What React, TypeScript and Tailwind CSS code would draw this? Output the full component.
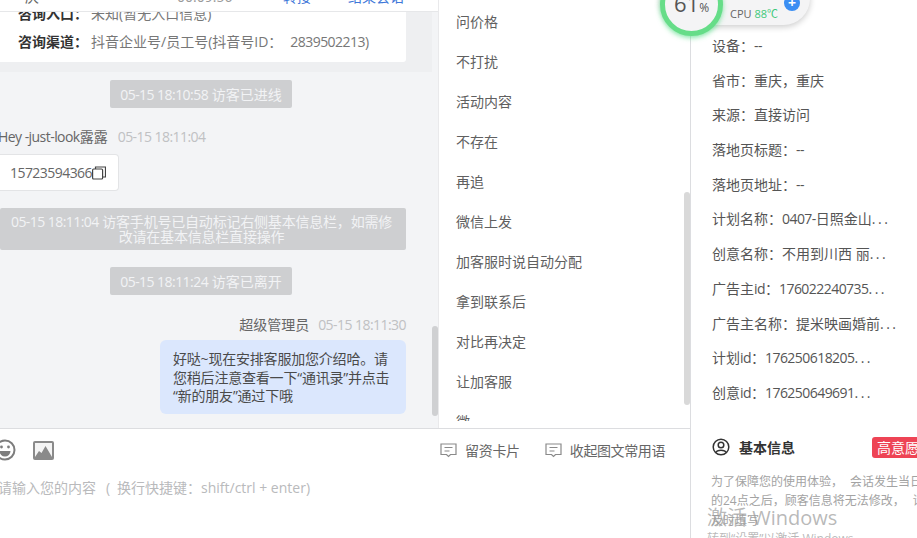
const font = { fontFamily: '"Open Sans","Noto Sans CJK SC",sans-serif' };

const quick = ["问价格", "不打扰", "活动内容", "不存在", "再追", "微信上发", "加客服时说自动分配", "拿到联系后", "对比再决定", "让加客服", "微"];
const info = ["设备：--", "省市：重庆，重庆", "来源：直接访问", "落地页标题：--", "落地页地址：--", "计划名称：0407-日照金山...", "创意名称：不用到川西 丽...", "广告主id：176022240735...", "广告主名称：提米映画婚前...", "计划id：176250618205...", "创意id：176250649691..."];

function T({ s }: { s: string }) {
  const parts = s.split(/([0-9A-Za-z:\-]+(?: [0-9A-Za-z:\-]+)*|\.\.\.)/);
  return (
    <>
      {parts.map((p, i) =>
        i % 2 === 0 ? p : <span key={i} className={p === "..." ? "tracking-[2.5px]" : "tracking-[-0.55px]"}>{p}</span>
      )}
    </>
  );
}

function Notice({ s, className }: { s: string; className: string }) {
  return <div className={`ml-[110px] flex h-[28px] w-[182px] items-center justify-center rounded-[2px] bg-[#cecfd1] text-[14px] text-[#f2f3f5] ${className}`}><span><T s={s} /></span></div>;
}

function CardIcon() {
  return (
    <svg width="17" height="15" viewBox="0 0 17 15" fill="none" stroke="#8a8a8a" strokeWidth="1.2">
      <path d="M1 1h15v10.5h-5.5l-2 2-2-2H1z" />
      <path d="M4.5 4.5h8M4.5 8h5" />
    </svg>
  );
}

export default function App() {
  return (
    <div style={font} className="relative flex h-[538px] w-[917px] overflow-hidden bg-white text-[14px] text-[#555]">
      <div className="flex w-[691px] shrink-0 flex-col border-r border-[#dcdde0]">
        <div className="flex h-[429px] border-b border-[#dcdde0]">
          <main className="relative w-[439px] shrink-0 overflow-hidden border-r border-[#e9e9eb] bg-[#f3f4f6]">
            <div className="flex h-[12px] items-end overflow-hidden border-b border-[#e6e7e9] bg-white text-[14px] leading-[20px]">
              <div className="mb-[4px] flex w-full items-center text-[#666]">
                <span className="ml-[25px] w-[152px]">庆</span>
                <span className="w-[106px] text-[#999]">00:09:56</span>
                <span className="w-[65px] text-[#3f78d9]">转接</span>
                <span className="text-[#3f78d9]">结束会话</span>
              </div>
            </div>
            <div className="h-[60px] w-[432px] bg-[#eeeff1] pr-[26px]">
              <div className="h-[50px] overflow-hidden rounded-br-[3px] bg-white pl-[18px] text-[14px]">
                <p className="-mt-[9px] flex h-[20px] items-center"><b className="font-bold text-[#333]">咨询入口：</b><span className="ml-[3px] text-[#777]">未知(暂无入口信息)</span></p>
                <p className="mt-[8px] flex h-[20px] items-center whitespace-nowrap"><b className="font-bold text-[#333]">咨询渠道：</b><span className="ml-[3px] text-[#777]">抖音企业号/员工号(抖音号ID：<span className="ml-[8px] tracking-[-0.55px]">2839502213</span>)</span></p>
              </div>
            </div>
            <Notice className="mt-[8px]" s="05-15 18:10:58 访客已进线" />
            <div className="mt-[18px] flex h-[20px] items-center whitespace-nowrap text-[14px]">
              <span className="-ml-[2px] text-[#666]"><T s="Hey -just-look" />露露</span>
              <span className="ml-[10px] text-[#c0c1c3]"><T s="05-15 18:11:04" /></span>
            </div>
            <div className="mt-[8px] flex h-[37px] w-[119px] items-center rounded-r-[4px] border border-l-0 border-[#e3e4e6] bg-white pl-[10px] text-[#666]">
              <span><T s="15723594366" /></span>
              <svg width="14" height="14" viewBox="0 0 14 14" fill="none" stroke="#444" strokeWidth="1.2"><rect x="0.6" y="3" width="10" height="10" rx="1" /><path d="M3.5 3V1h10v10h-2.5" /></svg>
            </div>
            <div className="mt-[17px] h-[42px] w-[406px] whitespace-nowrap rounded-[2px] bg-[#cecfd1] pr-[3px] pt-[6px] text-center text-[14px] leading-[15px] tracking-[-0.2px] text-[#f2f3f5]">
              <T s="05-15 18:11:04" /> 访客手机号已自动标记右侧基本信息栏，如需修<br />改请在基本信息栏直接操作
            </div>
            <Notice className="mt-[17px]" s="05-15 18:11:24 访客已离开" />
            <div className="mr-[32px] mt-[19px] flex h-[20px] items-center justify-end whitespace-nowrap">
              <span className="text-[#666]">超级管理员</span>
              <span className="ml-[9px] text-[#c0c1c3]"><T s="05-15 18:11:30" /></span>
            </div>
            <div className="ml-[160px] mt-[6px] h-[74px] w-[246px] whitespace-nowrap rounded-[6px] bg-[#dbe7fd] pl-[13px] pt-[10px] text-[14px] leading-[18.5px] tracking-[-0.2px] text-[#4a4a4a]">
              好哒~现在安排客服加您介绍哈。请<br />您稍后注意查看一下“通讯录”并点击<br />“新的朋友”通过下哦
            </div>
            <div className="absolute left-[432px] top-[326px] h-[90px] w-[6px] rounded-[3px] bg-[#cfd0d2]" />
          </main>
          <aside className="relative w-[251px] bg-white">
            <div className="h-[421px] overflow-hidden">
              <ul className="mt-[2px] pl-[17px] text-[14px] leading-[40px] text-[#606060]">
                {quick.map((q) => <li key={q} className="h-[40px]">{q}</li>)}
              </ul>
            </div>
            <div className="absolute right-0 top-[192px] h-[213px] w-[6px] rounded-[3px] bg-[#d9d9d9]" />
          </aside>
        </div>
        <div className="flex h-[109px] flex-col">
          <div className="flex h-[42px] items-center">
            <svg className="-ml-[7px]" width="24" height="24" viewBox="0 0 24 24" fill="none" stroke="#7d7d7d" strokeWidth="2"><circle cx="12" cy="12" r="9.5" /><circle cx="8.5" cy="9" r="1.4" fill="#7d7d7d" stroke="none" /><circle cx="15.5" cy="9" r="1.4" fill="#7d7d7d" stroke="none" /><path d="M6.5 13h11a5.5 5.5 0 0 1-11 0z" fill="#7d7d7d" stroke="none" /></svg>
            <svg className="ml-[16px]" width="21" height="19" viewBox="0 0 21 19"><rect width="21" height="19" rx="2" fill="#8a8a8a" /><rect x="2" y="2" width="17" height="14" fill="#f4f4f4" /><path d="M2 16l4-6 2.5 2 4-7 6.500 11z" fill="#8a8a8a" /></svg>
            <div className="ml-auto mr-[25px] flex items-center text-[#666]">
              <CardIcon /><span className="ml-[8px] tracking-[-0.3px]">留资卡片</span>
              <span className="ml-[25px]"><CardIcon /></span><span className="ml-[8px] tracking-[-0.4px]">收起图文常用语</span>
            </div>
          </div>
          <div className="-ml-[2px] mt-[6px] flex whitespace-nowrap text-[14px] text-[#b9babc]">请输入您的内容<span className="w-[21px] pl-[10px]">(</span>换行快捷键：shift/ctrl + enter)</div>
        </div>
      </div>

      <section className="min-w-0 flex-1 overflow-hidden whitespace-nowrap bg-white pl-[21px] text-[14px] text-[#555]">
        <div className="pt-[36px]">
          {info.map((t) => <div key={t} className="h-[34.7px] leading-[20px]"><T s={t} /></div>)}
        </div>
        <div className="mt-[19px] flex items-center">
          <svg className="shrink-0" width="18" height="18" viewBox="0 0 18 18" fill="none" stroke="#333" strokeWidth="1.5"><circle cx="9" cy="9" r="7.8" /><circle cx="9" cy="7" r="2.8" /><path d="M4 14.500c1-3 9-3 10 0" /></svg>
          <b className="ml-[9px] shrink-0 font-bold text-[#333]">基本信息</b>
          <span className="ml-[77px] shrink-0 rounded-[3px] bg-[#ee4455] px-[5px] text-[#fff]">高意愿</span>
        </div>
        <p className="-ml-px mt-[14px] text-[12px] leading-[19.5px] text-[#a3a3a3]">为了保障您的使用体验，<span className="ml-[7px]">会话发生当日</span><br />的24点之后，顾客信息将无法修改，<span className="ml-[8px]">请</span><br />及时填写</p>
      </section>

      <div className="absolute left-[660px] top-[-28px] flex h-[53px] w-[150px] items-end rounded-[27px] bg-[#f4f4f5] shadow-[0_2px_6px_rgba(0,0,0,0.2)]">
        <span className="mb-[4px] ml-[70px] text-[11px] leading-[14px] text-[#666]">CPU <span className="text-[#3ec97a]">88℃</span></span>
        <span className="absolute left-[124px] top-[23px] flex h-[16px] w-[16px] items-center justify-center rounded-full bg-[#3b8ef3] text-[14px] font-bold leading-none text-white">+</span>
      </div>
      <div className="absolute left-[660px] top-[-27px] flex h-[63px] w-[63px] items-center justify-center rounded-full border-[5px] border-[#66dd88] bg-[#f4f4f5] text-[22px] text-[#555] shadow-[0_2px_5px_rgba(80,220,130,0.7)]">
        <span className="-mt-[2px]">61<span className="text-[12px]">%</span></span>
      </div>

      <div className="pointer-events-none absolute left-[707px] top-[504px] whitespace-nowrap text-[20px] leading-[28px] text-[#9a9a9a]/70">激活 Windows</div>
      <div className="pointer-events-none absolute left-[707px] top-[531px] whitespace-nowrap text-[12px] leading-[16px] text-[#9a9a9a]/70">转到“设置”以激活 Windows。</div>
    </div>
  );
}
